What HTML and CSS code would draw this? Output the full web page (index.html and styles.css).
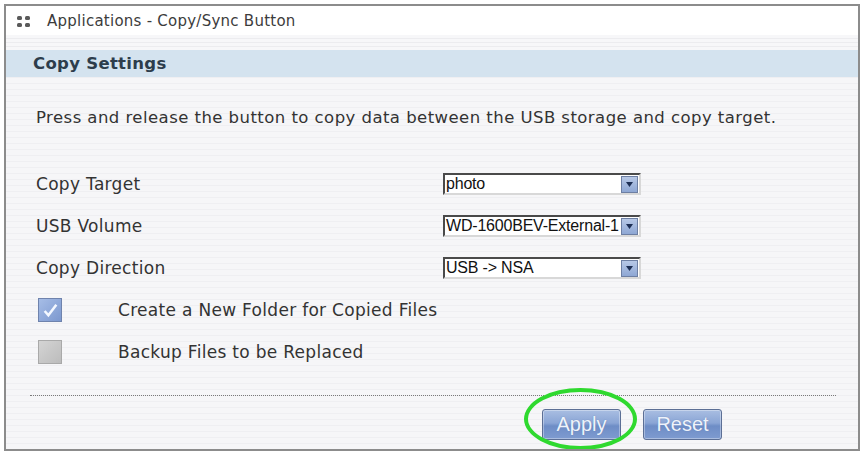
FILE: index.html
```html
<!DOCTYPE html>
<html lang="en">
<head>
<meta charset="utf-8">
<title>Applications - Copy/Sync Button</title>
<link rel="stylesheet" href="styles.css">
</head>
<body>
<div class="frame">
  <div class="titlebar">
    <svg class="title-icon" width="13" height="11" viewBox="0 0 13 11">
      <rect x="0" y="0" width="5" height="4" rx="1.5" fill="#5a5a5a"/>
      <rect x="8" y="0" width="5" height="4" rx="1.5" fill="#5a5a5a"/>
      <rect x="0" y="7" width="5" height="4" rx="1.5" fill="#5a5a5a"/>
      <rect x="8" y="7" width="5" height="4" rx="1.5" fill="#5a5a5a"/>
    </svg>
    <span class="title-text">Applications - Copy/Sync Button</span>
  </div>
  <div class="title-gap"></div>
  <div class="section-head">Copy Settings</div>
  <div class="content">
    <p class="desc">Press and release the button to copy data between the USB storage and copy target.</p>
    <div class="form">
      <div class="row">
        <span class="label">Copy Target</span>
        <div class="select"><span class="select-value">photo</span><span class="select-btn"><svg width="7" height="5" viewBox="0 0 7 5"><path d="M0 0h7L3.5 5z" fill="#1d2f55"/></svg></span></div>
      </div>
      <div class="row">
        <span class="label">USB Volume</span>
        <div class="select"><span class="select-value">WD-1600BEV-External-1</span><span class="select-btn"><svg width="7" height="5" viewBox="0 0 7 5"><path d="M0 0h7L3.5 5z" fill="#1d2f55"/></svg></span></div>
      </div>
      <div class="row">
        <span class="label">Copy Direction</span>
        <div class="select"><span class="select-value">USB -&gt; NSA</span><span class="select-btn"><svg width="7" height="5" viewBox="0 0 7 5"><path d="M0 0h7L3.5 5z" fill="#1d2f55"/></svg></span></div>
      </div>
      <div class="row check-row">
        <span class="check checked"><svg width="17" height="17" viewBox="0 0 16 16"><path d="M2.5 8.5l3.5 4 7.5-10" fill="none" stroke="#f4f8ff" stroke-width="2.4"/></svg></span>
        <span class="check-label">Create a New Folder for Copied Files</span>
      </div>
      <div class="row check-row">
        <span class="check"></span>
        <span class="check-label">Backup Files to be Replaced</span>
      </div>
    </div>
    <div class="divider"></div>
    <div class="actions">
      <button class="btn" type="button">Apply</button>
      <button class="btn" type="button">Reset</button>
      <span class="highlight"></span>
    </div>
  </div>
</div>
</body>
</html>
```

FILE: styles.css
```css
html, body {
  margin: 0;
  padding: 0;
  background: #ffffff;
}

body {
  font-family: "DejaVu Sans", Verdana, sans-serif;
  color: #333;
}

.frame {
  margin: 4px 2px 0 4px;
  width: 852px;
  height: 443px;
  border: 2px solid #8c8c8c;
  display: flex;
  flex-direction: column;
  background: repeating-linear-gradient(to bottom, #f6f6f8 0, #f6f6f8 5px, #efeff2 5px, #efeff2 6px);
  overflow: hidden;
}

.titlebar {
  height: 29px;
  background: #ffffff;
  display: flex;
  align-items: center;
  padding-left: 11px;
  flex: none;
}

.title-icon {
  margin-right: 17px;
  margin-top: 1px;
}

.title-text {
  font-size: 15px;
  letter-spacing: 0.25px;
  color: #3c3c3c;
}

.title-gap {
  height: 15px;
  flex: none;
  background: repeating-linear-gradient(to bottom, #f7f7f9 0, #f7f7f9 3px, #ececef 3px, #ececef 4px);
}

.section-head {
  height: 27px;
  flex: none;
  background: #d4e3ef;
  font-weight: bold;
  font-size: 16.5px;
  letter-spacing: 0.3px;
  color: #2d3d4c;
  display: flex;
  align-items: center;
  padding-left: 27px;
}

.content {
  position: relative;
  flex: 1;
  display: flex;
  flex-direction: column;
}

.desc {
  margin: 31px 0 0 30px;
  height: 20px;
  line-height: 20px;
  font-size: 16.5px;
  letter-spacing: 0.45px;
  color: #333;
  white-space: nowrap;
}

.form {
  margin-top: 35px;
  display: flex;
  flex-direction: column;
}

.row {
  height: 42px;
  display: flex;
  align-items: center;
  padding-left: 30px;
}

.label {
  width: 407px;
  font-size: 17px;
  letter-spacing: 0.3px;
  color: #333;
}

.select {
  width: 194px;
  height: 18px;
  background: #ffffff;
  border-top: 2px solid #4a4a4a;
  border-left: 2px solid #4a4a4a;
  border-right: 2px solid #d8d8d8;
  border-bottom: 2px solid #d8d8d8;
  display: flex;
  align-items: center;
  justify-content: space-between;
  overflow: hidden;
}

.select-value {
  font-family: "Liberation Sans", Arial, sans-serif;
  font-size: 16px;
  color: #111;
  white-space: nowrap;
  overflow: hidden;
  padding-left: 1px;
  flex: 1;
  letter-spacing: -0.2px;
}

.select-btn {
  flex: none;
  width: 15px;
  height: 15px;
  margin-right: 1px;
  border: 1px solid #6d7fa3;
  background: linear-gradient(to bottom, #b7c8e6, #8ea7d4);
  display: flex;
  align-items: center;
  justify-content: center;
}

.check-row {
  padding-left: 32px;
}

.check {
  width: 24px;
  height: 24px;
  box-sizing: border-box;
  border: 1px solid #a9a9a9;
  background: linear-gradient(135deg, #d4d4d4, #bcbcbc);
  display: flex;
  align-items: center;
  justify-content: center;
}

.check.checked {
  border-color: #6f83ad;
  background: linear-gradient(135deg, #a6bde6, #7c98cf);
}

.check-label {
  margin-left: 56px;
  font-size: 17px;
  letter-spacing: 0.3px;
  color: #333;
}

.divider {
  margin: 22px 22px 0 24px;
  height: 0;
  border-top: 1px dotted #7a7a7a;
}

.actions {
  margin-top: 13px;
  display: flex;
  gap: 22px;
  padding-left: 536px;
}

.btn {
  width: 79px;
  height: 31px;
  border: 1px solid #5c6f95;
  border-radius: 3px;
  background: linear-gradient(to bottom, #a9bee2 0%, #8aa5d5 45%, #6e8dc6 55%, #7e9bd0 100%);
  box-shadow: inset 0 0 0 1px rgba(255, 255, 255, 0.35);
  font-family: "Liberation Sans", Arial, sans-serif;
  font-size: 20px;
  color: #eef3fb;
  text-shadow: 0 0 1px #5c78ab;
  padding: 0;
  cursor: pointer;
}

.highlight {
  position: absolute;
  left: 518px;
  top: 311px;
  width: 113px;
  height: 62px;
  box-sizing: border-box;
  border: 4px solid #2fd92f;
  border-radius: 50%;
  pointer-events: none;
}
```
